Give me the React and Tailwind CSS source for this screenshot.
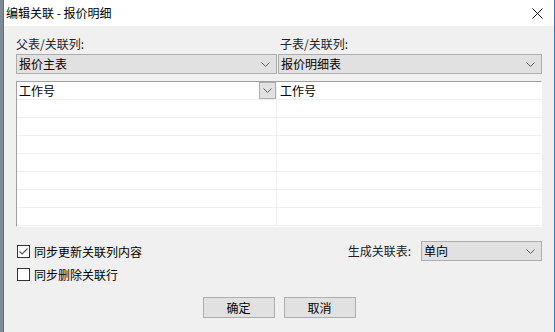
import React from 'react'

const font = { fontFamily: '"Noto Sans CJK SC", "Microsoft YaHei", sans-serif' }

function Chevron() {
  return (
    <svg width="9" height="5" viewBox="0 0 9 5" className="shrink-0">
      <path d="M0.5 0.5 L4.5 4.5 L8.5 0.5" fill="none" stroke="#606060" strokeWidth="1" />
    </svg>
  )
}

function Combo({ text, className = '' }) {
  return (
    <div className={`h-[20px] flex items-center justify-between border border-[#adadad] bg-[#e1e1e1] pl-[2px] pr-[6px] ${className}`}>
      <span className="text-[12px] leading-none text-black">{text}</span>
      <Chevron />
    </div>
  )
}

function Checkbox({ checked, label }) {
  return (
    <div className="flex items-center gap-[4px]">
      <div className="w-[13px] h-[13px] border border-[#333333] bg-white flex items-center justify-center">
        {checked && (
          <svg width="9" height="7" viewBox="0 0 9 7">
            <path d="M0.5 3.5 L3.2 6 L8.5 0.5" fill="none" stroke="#555555" strokeWidth="1.1" />
          </svg>
        )}
      </div>
      <span className="text-[12px] leading-none text-black">{label}</span>
    </div>
  )
}

const rows = [0, 1, 2, 3, 4, 5, 6]

export default function App() {
  return (
    <div className="w-[555px] h-[332px] flex bg-[#f0f0f0] overflow-hidden" style={font}>
      <div className="w-[3px] bg-[#7f8a96]" />
      <div className="w-px bg-[#2b79d0]" />
      <div className="flex-1 flex flex-col">
        {/* title bar */}
        <div className="h-[26px] bg-white flex items-center justify-between pl-[2px] pr-[11px]">
          <span className="text-[12px] leading-none text-black">编辑关联 - 报价明细</span>
          <svg width="11" height="11" viewBox="0 0 11 11">
            <path d="M0.5 0.5 L10.5 10.5 M10.5 0.5 L0.5 10.5" stroke="#111111" strokeWidth="1" />
          </svg>
        </div>

        {/* body */}
        <div className="flex-1 flex flex-col pl-[12px] pr-[12px] pt-[12px]">
          <div className="flex">
            <div className="w-[262px] flex flex-col">
              <div className="h-[16px] text-[12px] leading-[12px] text-[#222222]">父表/关联列:</div>
              <Combo text="报价主表" className="w-[261px]" />
            </div>
            <div className="flex-1 flex flex-col">
              <div className="h-[16px] pl-[2px] text-[12px] leading-[12px] text-[#222222]">子表/关联列:</div>
              <Combo text="报价明细表" />
            </div>
          </div>

          {/* grid */}
          <div className="mt-[7px] border-t border-l border-[#a0a0a0] border-r border-r-white border-b border-b-white bg-white flex">
            <div className="w-[260px] border-r border-[#efefef] flex flex-col">
              <div className="h-[18px] border-b border-[#efefef] flex items-center justify-between pl-[2px]">
                <span className="text-[12px] leading-none text-black">工作号</span>
                <div className="w-[17px] h-[17px] border border-[#adadad] bg-[#e1e1e1] flex items-center justify-center">
                  <Chevron />
                </div>
              </div>
              {rows.map(r => (
                <div key={r} className="h-[18px] border-b border-[#efefef]" />
              ))}
            </div>
            <div className="flex-1 flex flex-col">
              <div className="h-[18px] border-b border-[#efefef] flex items-center pl-[3px]">
                <span className="text-[12px] leading-none text-black">工作号</span>
              </div>
              {rows.map(r => (
                <div key={r} className="h-[18px] border-b border-[#efefef]" />
              ))}
            </div>
          </div>

          {/* options */}
          <div className="mt-[14px] flex items-start justify-between">
            <div className="flex flex-col gap-[10px] pt-[4px] pl-px">
              <Checkbox checked label="同步更新关联列内容" />
              <Checkbox label="同步删除关联行" />
            </div>
            <div className="flex items-center gap-[10px]">
              <span className="text-[12px] leading-none text-[#222222]">生成关联表:</span>
              <Combo text="单向" className="w-[121px]" />
            </div>
          </div>

          {/* buttons */}
          <div className="mt-[16px] flex justify-center gap-[9px]">
            <div className="w-[72px] h-[21px] border border-[#adadad] bg-[#e1e1e1] flex items-center justify-center text-[12px] leading-none text-black">确定</div>
            <div className="w-[72px] h-[21px] border border-[#adadad] bg-[#e1e1e1] flex items-center justify-center text-[12px] leading-none text-black">取消</div>
          </div>
        </div>
      </div>
      <div className="w-px bg-[#2b79d0]" />
    </div>
  )
}
